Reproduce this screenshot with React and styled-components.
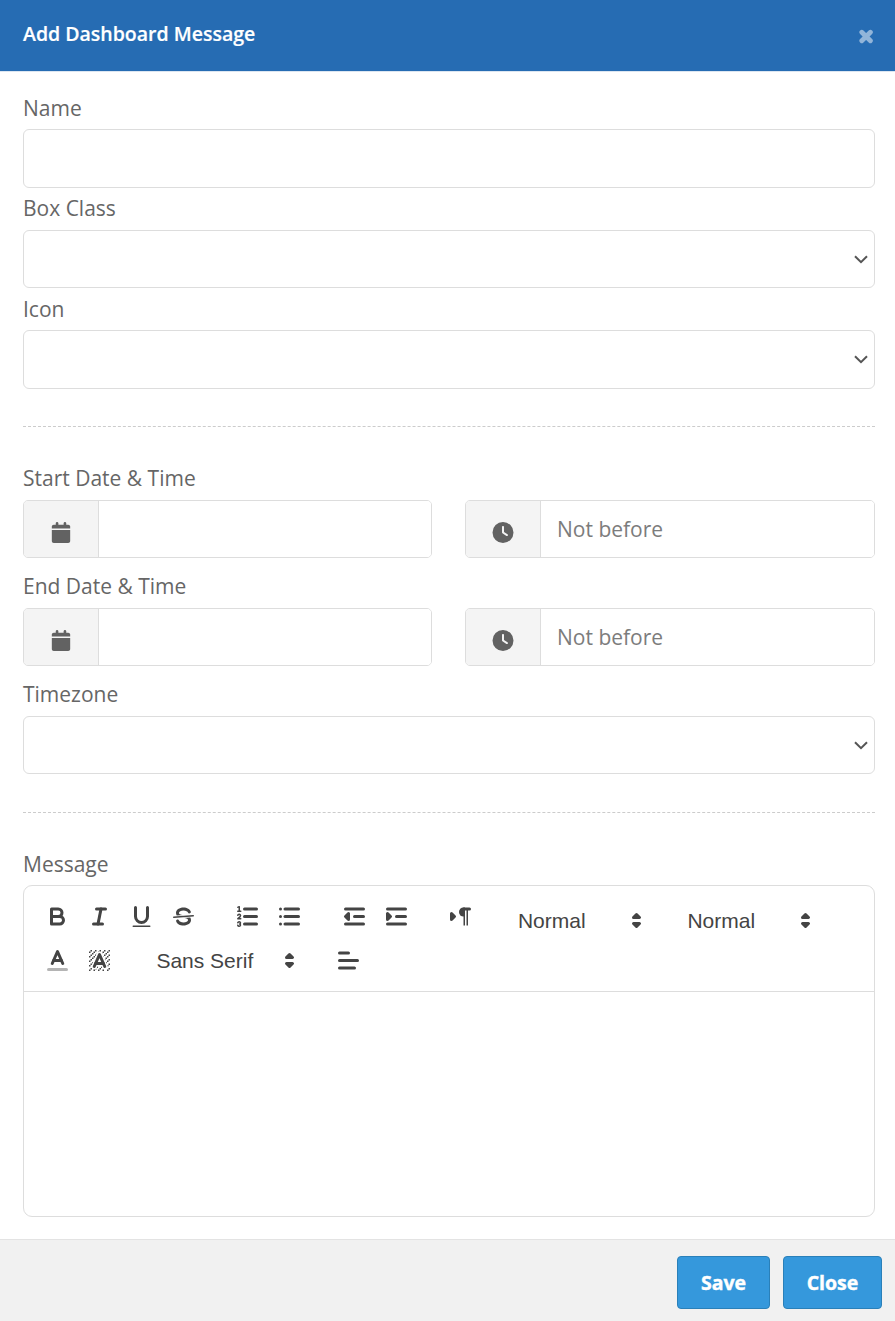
import React from 'react';
import styled, { createGlobalStyle } from 'styled-components';
import { FaCalendar, FaClock } from 'react-icons/fa6';

const hatchCells = [
  [4, 4], [2, 6], [3, 5], [4, 7], [2, 12], [2, 9], [2, 15], [3, 8], [12, 2], [11, 3],
  [2, 3], [6, 2], [3, 2], [5, 3], [9, 2], [15, 14], [13, 7], [15, 5], [14, 6], [15, 8],
  [14, 9], [14, 3], [15, 2], [12, 5], [13, 4], [9, 14], [8, 15], [5, 15], [11, 15], [14, 15], [15, 11],
];

const Lines = ({ x1, widths }) => (
  <>
    <line x1={x1} x2={widths[0]} y1="4" y2="4" />
    <line x1={x1} x2={widths[1]} y1="9" y2="9" />
    <line x1={x1} x2={widths[2]} y1="14" y2="14" />
  </>
);

const icons = {
  bold: (
    <>
      <path d="M5,4H9.5A2.5,2.5,0,0,1,12,6.5v0A2.5,2.5,0,0,1,9.5,9H5V4Z" />
      <path d="M5,9h5.5A2.5,2.5,0,0,1,13,11.5v0A2.5,2.5,0,0,1,10.5,14H5V9Z" />
    </>
  ),
  italic: (
    <>
      <line x1="7" x2="13" y1="4" y2="4" />
      <line x1="5" x2="11" y1="14" y2="14" />
      <line x1="8" x2="10" y1="14" y2="4" />
    </>
  ),
  underline: (
    <>
      <path d="M5,3V9a4.012,4.012,0,0,0,4,4H9a4.012,4.012,0,0,0,4-4V3" />
      <rect className="fill" height="1" rx="0.5" ry="0.5" width="12" x="3" y="15" />
    </>
  ),
  strike: (
    <>
      <line className="thin" x1="15.5" x2="2.5" y1="8.5" y2="9.5" />
      <path className="fill" d="M9.007,8C6.542,7.791,6,7.519,6,6.5,6,5.792,7.283,5,9,5c1.571,0,2.765.679,2.969,1.309a1,1,0,0,0,1.9-.617C13.356,4.106,11.354,3,9,3,6.2,3,4,4.538,4,6.5a3.2,3.2,0,0,0,.5,1.843Z" />
      <path className="fill" d="M8.984,10C11.457,10.208,12,10.479,12,11.5c0,0.708-1.283,1.5-3,1.5-1.571,0-2.765-.679-2.969-1.309a1,1,0,1,0-1.9.617C4.644,13.894,6.646,15,9,15c2.8,0,5-1.538,5-3.5a3.2,3.2,0,0,0-.5-1.843Z" />
    </>
  ),
  ordered: (
    <>
      <Lines x1="7" widths={[15, 15, 15]} />
      <line className="thin" x1="2.5" x2="4.5" y1="5.5" y2="5.5" />
      <path className="fill" d="M3.5,6A0.5,0.5,0,0,1,3,5.5V3.085l-0.276.138A0.5,0.5,0,0,1,2.053,3c-0.124-.247-0.023-0.324.224-0.447l1-.5A0.5,0.5,0,0,1,4,2.5v3A0.5,0.5,0,0,1,3.5,6Z" />
      <path className="thin" d="M4.5,10.5h-2c0-.234,1.85-1.076,1.85-2.234A0.959,0.959,0,0,0,2.5,8.156" />
      <path className="thin" d="M2.5,14.846a0.959,0.959,0,0,0,1.85-.109A0.7,0.7,0,0,0,3.75,14a0.688,0.688,0,0,0,.6-0.736,0.959,0.959,0,0,0-1.85-.109" />
    </>
  ),
  bullet: (
    <>
      <Lines x1="6" widths={[15, 15, 15]} />
      <Lines x1="3" widths={[3, 3, 3]} />
    </>
  ),
  outdent: (
    <>
      <line x1="3" x2="15" y1="14" y2="14" />
      <line x1="3" x2="15" y1="4" y2="4" />
      <line x1="9" x2="15" y1="9" y2="9" />
      <polyline className="solid" points="5 7 5 11 3 9 5 7" />
    </>
  ),
  indent: (
    <>
      <line x1="3" x2="15" y1="14" y2="14" />
      <line x1="3" x2="15" y1="4" y2="4" />
      <line x1="9" x2="15" y1="9" y2="9" />
      <polyline className="solid" points="3 7 3 11 5 9 3 7" />
    </>
  ),
  direction: (
    <>
      <polygon className="solid" points="3 11 5 9 3 7 3 11" />
      <line x1="15" x2="11" y1="4" y2="4" />
      <path className="fill" d="M11,3a3,3,0,0,0,0,6h1V3H11Z" />
      <rect className="fill" height="11" width="1" x="11" y="4" />
      <rect className="fill" height="11" width="1" x="13" y="4" />
    </>
  ),
  color: (
    <>
      <line opacity="0.4" x1="3" x2="15" y1="15" y2="15" />
      <polyline points="5.5 11 9 3 12.5 11" />
      <line x1="11.63" x2="6.38" y1="9" y2="9" />
    </>
  ),
  background: (
    <>
      <g className="fill">
        {hatchCells.map(([x, y]) => (
          <rect key={`${x}-${y}`} height="1" width="1" x={x} y={y} />
        ))}
        <polygon points="6 6.868 6 6 5 6 5 7 5.942 7 6 6.868" />
        <polygon points="6.817 5 6 5 6 6 6.38 6 6.817 5" />
        <polygon points="4 11.439 4 11 3 11 3 12 3.755 12 4 11.439" />
        <polygon points="4.63 10 4 10 4 11 4.192 11 4.63 10" />
        <polygon points="13.447 10.174 13.808 11 14 11 14 10 13.37 10 13.447 10.174" />
        <polygon points="12 6.868 12 6 11.62 6 12 6.868" />
        <polygon points="12.933 9 13 9 13 8 12.495 8 12.933 9" />
        <path d="M10.832,4.2L11,4.582V4H10.708A1.948,1.948,0,0,1,10.832,4.2Z" />
        <path d="M7,4.582L7.168,4.2A1.929,1.929,0,0,1,7.292,4H7V4.582Z" />
        <path d="M8,13H7.683l-0.351.8a1.933,1.933,0,0,1-.124.2H8V13Z" />
        <path d="M9,3H8V3.282A1.985,1.985,0,0,1,9,3Z" />
        <path d="M3.775,14H3v1H4V14.314A1.97,1.97,0,0,1,3.775,14Z" />
        <path d="M6,14.926V15H7V14.316A1.993,1.993,0,0,1,6,14.926Z" />
        <path d="M10.668,13.8L10.317,13H10v1h0.792A1.947,1.947,0,0,1,10.668,13.8Z" />
        <path d="M14.332,12.2a1.99,1.99,0,0,1,.166.8H15V12H14.245Z" />
      </g>
      <polyline points="5.5 13 9 5 12.5 13" />
      <line x1="11.63" x2="6.38" y1="11" y2="11" />
    </>
  ),
  align: <Lines x1="3" widths={[9, 15, 13]} />,
  arrows: (
    <>
      <polygon className="solid" points="7 11 9 13 11 11 7 11" />
      <polygon className="solid" points="7 7 9 5 11 7 7 7" />
    </>
  ),
};

const Icon = ({ name }) => <Glyph viewBox="0 0 18 18">{icons[name]}</Glyph>;

const Tools = ({ names }) => (
  <Group>
    {names.map((name) => (
      <Tool key={name} aria-label={name}>
        <Icon name={name} />
      </Tool>
    ))}
  </Group>
);

const Picker = ({ label, width, drop }) => (
  <PickerBox $width={width} $drop={drop}>
    {label}
    <Icon name="arrows" />
  </PickerBox>
);

const Select = ({ height }) => (
  <SelectBox $height={height}>
    <svg width="14" height="9" viewBox="0 0 14 9">
      <path d="M1 1.2 7 7.2 13 1.2" fill="none" stroke="#555" strokeWidth="2" />
    </svg>
  </SelectBox>
);

const DateRow = () => (
  <Row>
    <InputGroup>
      <Addon><FaCalendar /></Addon>
      <GroupInput />
    </InputGroup>
    <InputGroup>
      <Addon><FaClock /></Addon>
      <GroupInput placeholder="Not before" />
    </InputGroup>
  </Row>
);

const App = () => {
  return (
    <Modal>
      <GlobalStyle />
      <Header>
        <Title>Add Dashboard Message</Title>
        <CloseIcon aria-label="Close">
          <svg width="15" height="15" viewBox="0 0 15 15">
            <path d="M2.8 3.2 11.4 11.8M11.4 3.2 2.8 11.8" stroke="currentColor" strokeWidth="4.8" strokeLinecap="round" />
          </svg>
        </CloseIcon>
      </Header>
      <Body>
        <Label $height={36}>Name</Label>
        <Input />
        <Label $height={37} $gap={5}>Box Class</Label>
        <Select height={58} />
        <Label $height={36} $gap={6}>Icon</Label>
        <Select height={59} />
        <Divider $top={37} />
        <Label $height={37}>Start Date &amp; Time</Label>
        <DateRow />
        <Label $height={37} $gap={13}>End Date &amp; Time</Label>
        <DateRow />
        <Label $height={37} $gap={13}>Timezone</Label>
        <Select height={58} />
        <Divider $top={38} />
        <Label $height={36}>Message</Label>
        <Editor>
          <Toolbar>
            <ToolbarRow $height={44}>
              <Tools names={['bold', 'italic', 'underline', 'strike']} />
              <Tools names={['ordered', 'bullet']} />
              <Tools names={['outdent', 'indent']} />
              <Tools names={['direction']} />
              <Picker label="Normal" width={147} drop />
              <Picker label="Normal" width={147} drop />
            </ToolbarRow>
            <ToolbarRow $height={36}>
              <Tools names={['color', 'background']} />
              <Picker label="Sans Serif" width={162} />
              <Tools names={['align']} />
            </ToolbarRow>
          </Toolbar>
        </Editor>
      </Body>
      <Footer>
        <Button $width={93}>Save</Button>
        <Button $width={99}>Close</Button>
      </Footer>
    </Modal>
  );
};

const GlobalStyle = createGlobalStyle`
  * {
    box-sizing: border-box;
  }
  body {
    margin: 0;
    background: #fff;
    font-family: 'Open Sans', sans-serif;
    font-size: 21px;
    color: #666;
  }
`;

const Modal = styled.div`
  display: flex;
  flex-direction: column;
  height: 1321px;
`;

const Header = styled.header`
  display: flex;
  justify-content: space-between;
  height: 72px;
  padding: 20px 21px 0 23px;
  background: #266cb3;
  border-bottom: 1px solid #dce6f1;
`;

const Title = styled.h4`
  margin: 0;
  font-size: 19.5px;
  line-height: 28px;
  font-weight: 600;
  color: #fff;
  -webkit-text-stroke: 0.2px #fff;
`;

const CloseIcon = styled.button`
  display: flex;
  align-items: flex-start;
  padding: 9px 0 0;
  border: none;
  background: transparent;
  color: #92b5d9;
`;

const Body = styled.main`
  flex: 1;
  display: flex;
  flex-direction: column;
  padding: 21px 20px 0 23px;
`;

const Label = styled.label`
  height: ${(p) => p.$height}px;
  margin-top: ${(p) => p.$gap || 0}px;
  line-height: 31px;
`;

const Input = styled.input`
  width: 100%;
  height: 59px;
  padding: 0 17px;
  border: 1px solid #ddd;
  border-radius: 6px;
  font: inherit;
`;

const SelectBox = styled.div`
  display: flex;
  align-items: center;
  justify-content: flex-end;
  height: ${(p) => p.$height}px;
  padding-right: 6px;
  border: 1px solid #ddd;
  border-radius: 6px;
`;

const Divider = styled.hr`
  width: 100%;
  margin: ${(p) => p.$top}px 0 36px;
  border: none;
  border-top: 1px dashed #ccc;
`;

const Row = styled.div`
  display: grid;
  grid-template-columns: 409px 410px;
  gap: 33px;
`;

const InputGroup = styled.div`
  display: flex;
  height: 58px;
  border: 1px solid #ddd;
  border-radius: 5px;
  overflow: hidden;
`;

const Addon = styled.span`
  display: flex;
  align-items: center;
  justify-content: center;
  width: 75px;
  padding-top: 7px;
  background: #f4f4f4;
  border-right: 1px solid #ddd;
  color: #626262;

  svg {
    width: 22px;
    height: 21px;
  }
`;

const GroupInput = styled.input`
  flex: 1;
  min-width: 0;
  padding: 0 16px;
  border: none;
  outline: none;
  font: inherit;

  &::placeholder {
    color: #7c7c7c;
  }
`;

const Editor = styled.section`
  height: 332px;
  border: 1px solid #ddd;
  border-radius: 9px;
`;

const Toolbar = styled.div`
  height: 106px;
  padding: 12.5px 12.2px 0;
  border-bottom: 1px solid #ddd;
`;

const ToolbarRow = styled.div`
  display: flex;
  gap: 22.5px;
  height: ${(p) => p.$height}px;
`;

const Group = styled.div`
  display: flex;
`;

const Tool = styled.button`
  width: 42px;
  height: 36px;
  padding: 4.5px 7.5px;
  border: none;
  background: none;
`;

const Glyph = styled.svg`
  display: block;
  width: 27px;
  height: 27px;
  fill: none;
  stroke: #444;
  stroke-width: 2;
  stroke-linecap: round;
  stroke-linejoin: round;

  .fill {
    fill: #444;
    stroke: none;
  }
  .solid {
    fill: #444;
  }
  .thin {
    stroke-width: 1;
  }
`;

const PickerBox = styled.div`
  display: flex;
  align-items: center;
  justify-content: space-between;
  width: ${(p) => p.$width}px;
  height: 36px;
  margin-top: ${(p) => (p.$drop ? 4 : 0)}px;
  padding: 0 1.7px 0 13.7px;
  font-family: 'Liberation Sans', Arial, sans-serif;
  font-weight: 500;
  color: #444;
`;

const Footer = styled.footer`
  display: flex;
  justify-content: flex-end;
  gap: 13px;
  height: 82px;
  padding: 16px 13px 0;
  background: #f1f1f1;
  border-top: 1px solid #e3e3e3;
`;

const Button = styled.button`
  width: ${(p) => p.$width}px;
  height: 53px;
  padding: 0;
  border: 1px solid #2a80b9;
  border-radius: 4px;
  background: #3598dc;
  font-family: inherit;
  font-size: 19.5px;
  font-weight: 700;
  color: #fff;
  -webkit-text-stroke: 0.4px #fff;
`;

export default App;
